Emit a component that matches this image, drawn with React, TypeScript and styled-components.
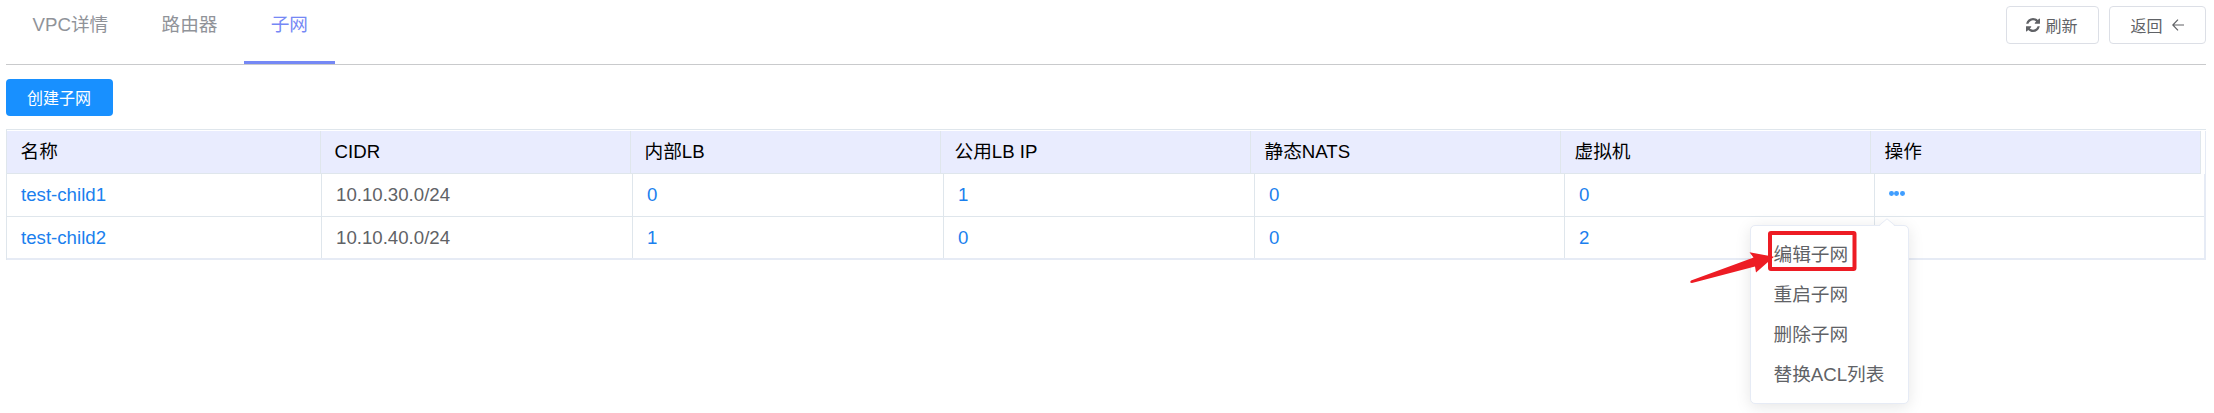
import React from "react";
import styled, { createGlobalStyle } from "styled-components";

const GlobalStyle = createGlobalStyle`
  * { box-sizing: border-box; }
  body {
    margin: 0;
    background: #fff;
    color: #606266;
    font-family: "Liberation Sans", "Noto Sans CJK SC", sans-serif;
    font-size: 18.67px;
    overflow: hidden;
  }
`;

const Page = styled.main`
  width: 2214px;
  height: 413px;
  padding: 0 8px 0 6px;
  overflow: hidden;
`;

const TopBar = styled.header`
  display: flex;
  justify-content: space-between;
  height: 65px;
  border-bottom: 1px solid #c9cacc;
`;

const Tabs = styled.nav`
  display: flex;
`;

const Tab = styled.a<{ $active?: boolean }>`
  height: 64px;
  padding: 0 26.6px;
  line-height: 49px;
  white-space: nowrap;
  color: ${(p) => (p.$active ? "#7588f5" : "#909399")};
  border-bottom: 3px solid ${(p) => (p.$active ? "#7588f5" : "transparent")};
`;

const Actions = styled.div`
  display: flex;
  gap: 10px;
  padding-top: 6px;
`;

const OutlineButton = styled.button<{ $width: number }>`
  display: flex;
  align-items: center;
  justify-content: center;
  gap: 5px;
  width: ${(p) => p.$width}px;
  height: 38px;
  padding: 0 1px 1px 0;
  border: 1px solid #dcdfe6;
  border-radius: 4px;
  background: #fff;
  color: #606266;
  font: 16px "Liberation Sans", "Noto Sans CJK SC", sans-serif;
`;

const BackIcon = styled.svg`
  margin-left: 4px;
`;

const CreateButton = styled.button`
  display: block;
  width: 107px;
  height: 37px;
  margin: 14px 0 13px;
  padding: 0 1px 2px 0;
  border: 0;
  border-radius: 4px;
  background: #1890ff;
  color: #fff;
  font: 16px "Liberation Sans", "Noto Sans CJK SC", sans-serif;
`;

const Table = styled.section`
  width: 2200px;
  padding-top: 1px;
  border-top: 1px solid #dfe6ec;
  border-left: 1px solid #dfe6ec;
`;

const HeadRow = styled.div`
  display: grid;
  grid-template-columns: 314px repeat(5, 310px) 330px;
  height: 43px;
  border-right: 1px solid #e6ebf5;
`;

const HeadCell = styled.div`
  padding-left: 13.5px;
  line-height: 41px;
  color: #000;
  background: #e9ecfe;
  border-right: 1px solid #dfe6ec;
  border-bottom: 1px solid #dfe6ec;
`;

const Body = styled.div`
  border-right: 2px solid #e6ebf5;
  border-bottom: 2px solid #e6ebf5;
`;

const Row = styled.div`
  display: grid;
  grid-template-columns: 315px 311px 311px 311px 310px 310px 1fr;
  height: 43px;
  border-bottom: 1px solid #dfe6ec;
  &:last-child {
    height: 41px;
    border-bottom: 0;
  }
`;

const Cell = styled.div<{ $link?: boolean }>`
  position: relative;
  padding-left: 14px;
  line-height: 41px;
  color: ${(p) => (p.$link ? "#1b7fee" : "#606266")};
  border-right: 1px solid #dfe6ec;
  &:last-child { border-right: 0; }
`;

const MoreButton = styled.button`
  display: flex;
  gap: 0.7px;
  margin-top: 17px;
  padding: 0;
  border: 0;
  background: none;
`;

const Dot = styled.span`
  width: 4.8px;
  height: 4.8px;
  border-radius: 50%;
  background: #409eff;
`;

const Menu = styled.ul`
  position: absolute;
  z-index: 2;
  top: 51px;
  left: -125px;
  width: 159px;
  height: 179px;
  margin: 0;
  padding: 9px 0 0 22.5px;
  list-style: none;
  background: #fff;
  border: 1px solid #e6ebf5;
  border-radius: 5px;
  box-shadow: 0 3px 16px rgba(0, 0, 0, 0.1);
`;

const MenuItem = styled.li`
  height: 40px;
  line-height: 40px;
  white-space: nowrap;
  color: #606266;
`;

const Caret = styled.svg`
  position: absolute;
  top: -8px;
  left: 127px;
`;

const Highlight = styled.svg`
  position: absolute;
  top: -1px;
  left: -66px;
  pointer-events: none;
`;

const columns = ["名称", "CIDR", "内部LB", "公用LB IP", "静态NATS", "虚拟机", "操作"];

const subnets = [
  { name: "test-child1", cidr: "10.10.30.0/24", counts: [0, 1, 0, 0], open: true },
  { name: "test-child2", cidr: "10.10.40.0/24", counts: [1, 0, 0, 2], open: false },
];

const menuItems = ["编辑子网", "重启子网", "删除子网", "替换ACL列表"];

function RefreshIcon() {
  return (
    <svg width="14" height="14" viewBox="0 0 1536 1536" fill="currentColor">
      <path d="M1511 928q0 5-1 7-64 268-268 434.500t-478 166.500q-146 0-282.500-55t-243.500-157l-129 129q-19 19-45 19t-45-19-19-45v-448q0-26 19-45t45-19h448q26 0 45 19t19 45-19 45l-137 137q71 66 161 102t187 36q134 0 250-65t186-179q11-17 53-117 8-23 30-23h192q13 0 22.500 9.500t9.500 22.500zm25-800v448q0 26-19 45t-45 19h-448q-26 0-45-19t-19-45 19-45l138-138q-148-137-349-137-134 0-250 65t-186 179q-11 17-53 117-8 23-30 23h-199q-13 0-22.500-9.500t-9.500-22.500v-7q65-268 270-434.500t480-166.500q146 0 284 55.500t245 156.500l130-129q19-19 45-19t45 19 19 45z" />
    </svg>
  );
}

function ActionMenu() {
  return (
    <Menu>
      <Caret width="18" height="9" viewBox="0 0 18 9">
        <path d="M1 8.5 9 1l8 7.5V9H1z" fill="#fff" />
        <path d="M1 7.5 9 .8l8 6.7" fill="none" stroke="#e6ebf5" />
      </Caret>
      {menuItems.map((item) => (
        <MenuItem key={item}>{item}</MenuItem>
      ))}
      <Highlight width="180" height="70" viewBox="1685 225 180 70">
        <rect x="1770" y="233" width="84.5" height="36" rx="1" fill="none" stroke="#ed1c24" strokeWidth="4" />
        <path
          d="M1691 280.500 1751 258.500 1753.500 257.500 1749.500 252.300 1774 256.800 1756 272.500 1755 266.500 1692 283Q1689 283 1691 280.500z"
          fill="#ed1c24"
        />
      </Highlight>
    </Menu>
  );
}

export default function App() {
  return (
    <Page>
      <GlobalStyle />
      <TopBar>
        <Tabs>
          <Tab>VPC详情</Tab>
          <Tab>路由器</Tab>
          <Tab $active>子网</Tab>
        </Tabs>
        <Actions>
          <OutlineButton $width={93}>
            <RefreshIcon />
            刷新
          </OutlineButton>
          <OutlineButton $width={97}>
            返回
            <BackIcon width="12" height="12" viewBox="0 0 12 12" fill="none" stroke="#606266" strokeWidth="1.2">
              <path d="M12 6H1M6 .7.800 6 6 11.300" />
            </BackIcon>
          </OutlineButton>
        </Actions>
      </TopBar>
      <CreateButton>创建子网</CreateButton>
      <Table>
        <HeadRow>
          {columns.map((title) => (
            <HeadCell key={title}>{title}</HeadCell>
          ))}
        </HeadRow>
        <Body>
          {subnets.map((subnet) => (
            <Row key={subnet.name}>
              <Cell $link>{subnet.name}</Cell>
              <Cell>{subnet.cidr}</Cell>
              {subnet.counts.map((count, i) => (
                <Cell key={i} $link>{count}</Cell>
              ))}
              <Cell>
                {subnet.open && (
                  <>
                    <MoreButton aria-label="操作">
                      <Dot />
                      <Dot />
                      <Dot />
                    </MoreButton>
                    <ActionMenu />
                  </>
                )}
              </Cell>
            </Row>
          ))}
        </Body>
      </Table>
    </Page>
  );
}
